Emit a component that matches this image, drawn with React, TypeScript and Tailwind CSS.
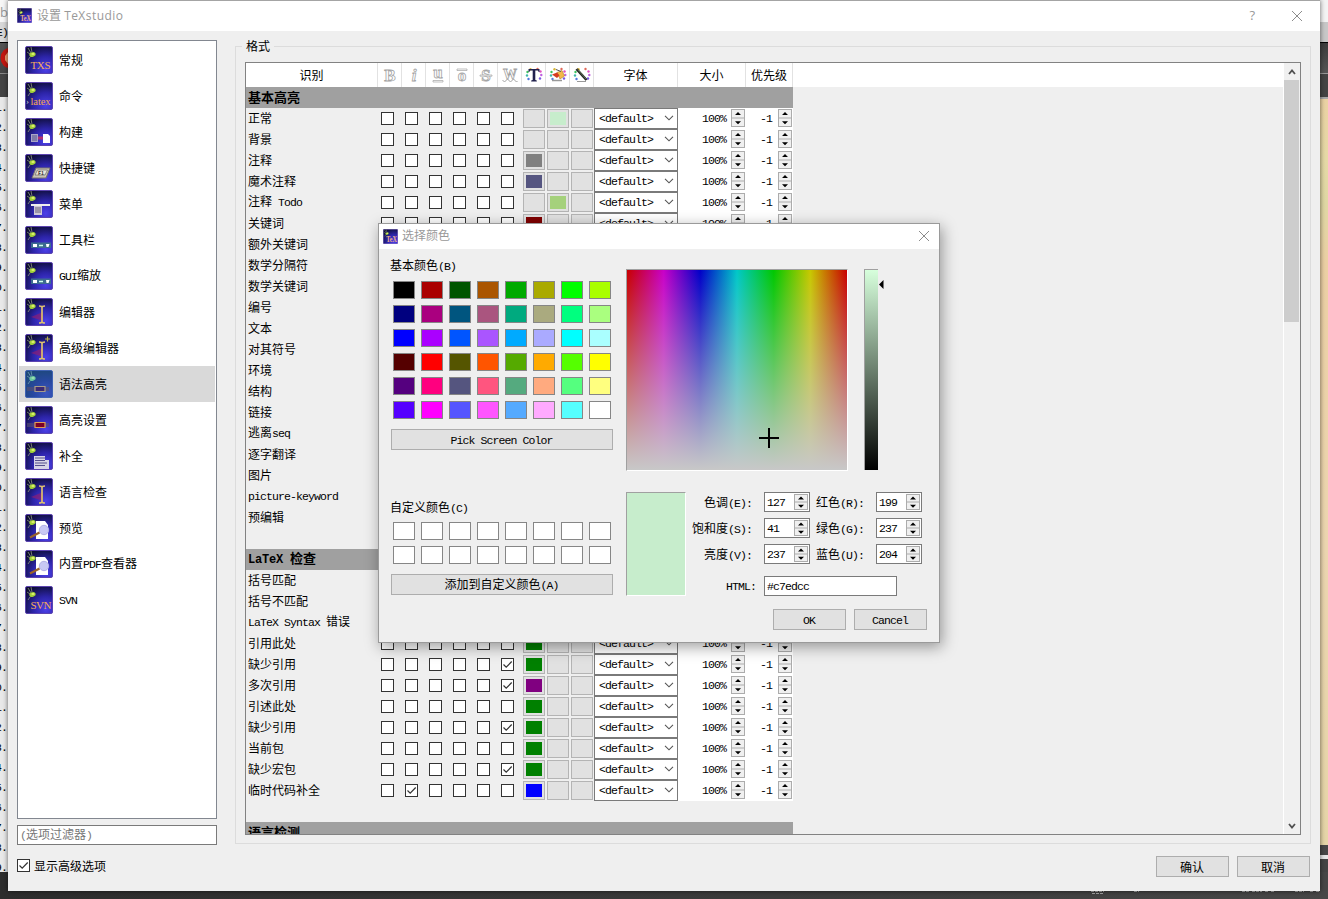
import React from 'react';

const CJK = "font-['Noto_Sans_CJK_SC',sans-serif]";

/** Mixed text: full-width glyphs take 12px, half-width glyphs take 6px. */
function T({ s, bold = false }: { s: string; bold?: boolean }) {
  const parts = s.match(/[\x20-\x7e]+|[^\x20-\x7e]+/g) ?? [];
  const ascii = /^[\x20-\x7e]+$/.test(s);
  return (
    <span
      className={
        (bold
          ? 'inline-flex items-baseline whitespace-pre text-[13px] font-bold leading-4'
          : 'inline-flex items-baseline whitespace-pre text-[12px] leading-4') + (ascii ? ' pt-[2px]' : '')
      }
    >
      {parts.map((p, i) =>
        /^[\x20-\x7e]+$/.test(p) ? (
          <span
            key={i}
            className={
              bold
                ? "font-['Liberation_Mono',monospace] text-[12px] tracking-[-0.2px]"
                : "font-['Liberation_Mono',monospace] text-[11.5px] tracking-[-0.9px]"
            }
          >
            {p}
          </span>
        ) : (
          <span key={i}>{p}</span>
        ),
      )}
    </span>
  );
}

function Glyph({ kind }: { kind: string }) {
  switch (kind) {
    case 'txs':
      return <text x="5.5" y="23" fontSize="11" fill="#f4ac5c" fontFamily="Liberation Serif" textLength="20">TXS</text>;
    case 'svn':
      return <text x="5.5" y="23" fontSize="11" fill="#f4ac5c" fontFamily="Liberation Serif" textLength="21">SVN</text>;
    case 'latex':
      return (
        <g fontFamily="Liberation Serif" fontSize="10.5">
          <text x="1" y="22" fill="#c8c8d8" fontSize="9">›</text>
          <text x="5.5" y="23" fill="#f4a850" textLength="20">latex</text>
        </g>
      );
    case 'build':
      return (
        <g>
          <path d="M6 16h7v8H6z" fill="#a9a4c8" />
          <path d="M7 18h5M7 20h5M7 22h5" stroke="#55508c" />
          <path d="M13 20h5" stroke="#b03070" strokeWidth="3" />
          <path d="M18 16h5l2 2v7h-7z" fill="#fff" />
        </g>
      );
    case 'key':
      return (
        <g>
          <path d="M11 14h14l-4 10H7z" fill="#c9c4b4" stroke="#77736c" />
          <path d="M12.500 16h10l-2.500 5H10z" fill="#e9e6da" stroke="#555" strokeWidth=".6" />
          <text x="13" y="20.500" fontSize="5" fontWeight="bold" fill="#333">F1</text>
        </g>
      );
    case 'menu':
      return (
        <g>
          <path d="M6 14h19v2H6z" fill="#eee" />
          <path d="M9 16h8v9H9z" fill="#cfc9d6" />
          <path d="M10 18h6M10 20h6M10 22h6" stroke="#66607a" />
        </g>
      );
    case 'tool':
      return (
        <g>
          <path d="M6 16.500h20v5.500H6z" fill="#3c6a90" />
          <path d="M8 18h4v3H8zM21 18h3.500l-1 3h-2z" fill="#fff" />
          <path d="M14 19.500h4" stroke="#cfe" strokeWidth="1.500" />
        </g>
      );
    case 'edit':
    case 'editplus':
      return (
        <g>
          <path d="M6 19l12-5v9z" fill="#9b1d68" opacity=".6" />
          <path d="M14 8c2 0 3 .5 3 1.500 0-1 1-1.500 3-1.500M17 9v15M14 25c2 0 3-.5 3-1.500 0 1 1 1.500 3 1.500" fill="none" stroke="#dcc070" strokeWidth="1.700" />
          {kind === 'editplus' && <path d="M20 5h5M22.500 2.500v5" stroke="#b9b04a" strokeWidth="1.200" />}
        </g>
      );
    case 'hl':
    case 'hlsel':
      return (
        <g>
          <path d="M2 17h22v4H2z" fill="#5a5070" opacity=".6" />
          <path d="M10 16.500h10v5H10z" fill={kind === 'hl' ? '#7c0028' : '#3c2a74'} stroke={kind === 'hl' ? '#dc9c58' : '#a89c88'} strokeWidth="1.200" />
        </g>
      );
    case 'comp':
      return (
        <g>
          <path d="M9 14h11v4h4v9H9z" fill="#d7d4e6" />
          <path d="M10 16h10M10 18.500h10M10 21h12M10 23.500h10" stroke="#55508c" />
        </g>
      );
    default:
      return (
        <g>
          <path d="M11 7h9l3 4v14H11z" fill="#fff" />
          <circle cx="19" cy="16" r="4.700" fill="#c8c8f4" stroke="#b2b0e6" />
          <path d="M5 23.500l9.500-5" stroke="#9a6228" strokeWidth="2.200" />
        </g>
      );
  }
}

function AppIcon({ kind, size, id }: { kind: string; size: number; id: string }) {
  const sel = kind === 'hlsel';
  return (
    <svg width={size} height={size} viewBox="0 0 28 28" className="shrink-0">
      <defs>
        <radialGradient id={id} cx=".75" cy=".85" r=".95">
          <stop offset="0" stopColor={sel ? '#3c56c0' : '#4c40e8'} />
          <stop offset=".5" stopColor={sel ? '#2848a0' : '#2c24a8'} />
          <stop offset="1" stopColor={sel ? '#1c4878' : '#0c0c30'} />
        </radialGradient>
      </defs>
      <rect x=".5" y=".5" width="27" height="27" rx="1.500" fill={'url(#' + id + ')'} stroke={sel ? '#3f62b4' : '#5c44b0'} />
      <path d="M3 2l3 5M6 1l1 5M2 6l3 2M5 11l-2 3" stroke={sel ? '#6f9ab0' : '#8c947c'} strokeWidth=".8" />
      <ellipse cx="7.500" cy="8.500" rx="3.200" ry="2.300" transform="rotate(-18 7.500 8.500)" fill={sel ? '#6cc8a0' : '#a0d038'} />
      <ellipse cx="8" cy="8" rx="1.600" ry="1.100" fill={sel ? '#9ce0b0' : '#e0f070'} />
      {kind === 'app' ? (
        <text x="6" y="25" fontSize="15" fontWeight="bold" fill="#f0b088" fontFamily="Liberation Serif" textLength="20" lengthAdjust="spacingAndGlyphs">TeX</text>
      ) : (
        <Glyph kind={kind} />
      )}
    </svg>
  );
}

const NAV: [string, string][] = [
  ['常规', 'txs'], ['命令', 'latex'], ['构建', 'build'], ['快捷键', 'key'], ['菜单', 'menu'], ['工具栏', 'tool'],
  ['GUI缩放', 'tool'], ['编辑器', 'edit'], ['高级编辑器', 'editplus'], ['语法高亮', 'hlsel'], ['高亮设置', 'hl'], ['补全', 'comp'],
  ['语言检查', 'edit'], ['预览', 'view'], ['内置PDF查看器', 'view'], ['SVN', 'svn'],
];

function Check({ on = false }: { on?: boolean }) {
  return (
    <span className="flex h-[13px] w-[13px] shrink-0 items-center justify-center border border-[#333] bg-white">
      {on && (
        <svg width="11" height="11" viewBox="0 0 11 11">
          <path d="M1.500 5.500l2.700 2.700L9.700 2.500" fill="none" stroke="#333" strokeWidth="1.200" />
        </svg>
      )}
    </span>
  );
}

function Spinner({ h }: { h: number }) {
  return (
    <svg width="14" height={h} viewBox={'0 0 14 ' + h} className="shrink-0">
      <rect x=".5" y=".5" width="13" height={h - 1} fill="#f0f0f0" stroke="#acacac" />
      <path d={'M0 ' + h / 2 + 'h14'} stroke="#acacac" />
      <path d={'M4 ' + (h / 4 + 1.5) + 'h6l-3-3zM4 ' + (h * 0.75 - 1.2) + 'h6l-3 3z'} fill="#000" />
    </svg>
  );
}

type Row = { n: string; on?: number; c?: [number, string] };

const BASIC: Row[] = [
  { n: '正常', c: [1, '#c7edcc'] }, { n: '背景' }, { n: '注释', c: [0, '#808080'] }, { n: '魔术注释', c: [0, '#555580'] },
  { n: '注释 Todo', c: [1, '#a5d17c'] }, { n: '关键词', c: [0, '#800000'] }, { n: '额外关键词' }, { n: '数学分隔符' }, { n: '数学关键词' },
  { n: '编号' }, { n: '文本' }, { n: '对其符号' }, { n: '环境' }, { n: '结构' }, { n: '链接' }, { n: '逃离seq' }, { n: '逐字翻译' },
  { n: '图片' }, { n: 'picture-keyword' }, { n: '预编辑' },
];
const G = '#008000';
const LATEX: Row[] = [
  { n: '括号匹配' }, { n: '括号不匹配' }, { n: 'LaTeX Syntax 错误' }, { n: '引用此处', c: [0, G] }, { n: '缺少引用', on: 5, c: [0, G] },
  { n: '多次引用', on: 5, c: [0, '#800080'] }, { n: '引述此处', c: [0, G] }, { n: '缺少引用', on: 5, c: [0, G] }, { n: '当前包', c: [0, G] },
  { n: '缺少宏包', on: 5, c: [0, G] }, { n: '临时代码补全', on: 1, c: [0, '#0000ff'] },
];

function FormatRow({ r }: { r: Row }) {
  return (
    <div className="flex h-[21px] w-[547px] shrink-0 items-stretch">
      <div className="flex w-[132px] items-center pb-[2px] pl-[2px]"><T s={r.n} /></div>
      {[0, 1, 2, 3, 4, 5].map((i) => (
        <div key={i} className="w-6 pl-[3px] pt-1"><Check on={r.on === i} /></div>
      ))}
      {[0, 1, 2].map((i) => (
        <div key={i} className="w-6 pl-px pt-px">
          <div className="flex h-[19px] w-[22px] items-center justify-center border border-[#b4b4b4] bg-[#e1e1e1]">
            {r.c && r.c[0] === i && <div className="h-[13px] w-4" style={{ background: r.c[1] }} />}
          </div>
        </div>
      ))}
      <div className="flex w-[84px] items-center justify-between border border-[#7a7a7a] bg-white pb-px pl-1 pr-[3px]">
        <T s="<default>" />
        <svg width="10" height="6" viewBox="0 0 10 6"><path d="M1 .8l4 4 4-4" fill="none" stroke="#555" strokeWidth="1.100" /></svg>
      </div>
      <div className="flex w-[68px] items-start justify-end bg-white pr-px pt-px">
        <span className="flex h-[18px] items-center pr-[5px]"><T s="100%" /></span>
        <Spinner h={18} />
      </div>
      <div className="flex w-[47px] items-start justify-end bg-white pr-px pt-px">
        <span className="flex h-[18px] items-center pr-[6px]"><T s="-1" /></span>
        <Spinner h={18} />
      </div>
    </div>
  );
}

function Category({ s }: { s: string }) {
  return (
    <div className="flex h-[21px] w-[547px] shrink-0 items-center bg-[#a0a0a0] pb-px pl-[2px]"><T s={s} bold /></div>
  );
}

function Letter({ c }: { c: string }) {
  const wave = c === 'W';
  return (
    <svg width="18" height="18" viewBox="0 0 18 18">
      <text
        x="9" y={c === 'u' ? 12 : c === 'o' ? 15 : wave ? 13 : 15}
        textAnchor="middle" fontFamily="Liberation Serif" fontWeight="bold"
        fontStyle={c === 'i' ? 'italic' : 'normal'}
        fontSize={wave ? 14 : 17} fill="#fff" stroke="#a4a4a4" strokeWidth=".8"
      >
        {c}
      </text>
      {c === 'u' && <path d="M4 14.500h10v1.500H4z" fill="#fff" stroke="#a4a4a4" strokeWidth=".7" />}
      {c === 'o' && <path d="M4 3h10v1.500H4z" fill="#fff" stroke="#a4a4a4" strokeWidth=".7" />}
      {c === 'S' && <path d="M3 9h12v1.200H3z" fill="#fff" stroke="#a4a4a4" strokeWidth=".7" />}
      {wave && <path d="M1.500 14l2 2 3-3 3 3 3-3 3 3 1-1" fill="none" stroke="#a4a4a4" />}
    </svg>
  );
}

function Dots() {
  return (
    <g>
      <circle cx="2.500" cy="6" r="1.200" fill="#3cc45c" /><circle cx="2" cy="9.500" r="1.200" fill="#40b8a8" /><circle cx="3.500" cy="13" r="1.200" fill="#5078e0" />
      <circle cx="15.500" cy="5.500" r="1.200" fill="#e050c0" /><circle cx="16.300" cy="9" r="1.200" fill="#c060e0" /><circle cx="15" cy="12.500" r="1.200" fill="#7858e0" />
      <circle cx="5.500" cy="3.300" r="1.200" fill="#d8b83c" /><circle cx="12.500" cy="3" r="1.200" fill="#e06858" />
    </g>
  );
}

function ColorHead({ k }: { k: number }) {
  return (
    <svg width="18" height="18" viewBox="0 0 18 18" className="ml-px">
      <Dots />
      {k === 0 && <path d="M3.500 3h11v3h-.8l-.7-1.600h-2.700V14l1.500.6v.9H6.200v-.9l1.500-.6V4.400H5L4.300 6h-.8z" fill="#20204c" />}
      {k === 1 && (
        <g>
          <path d="M8 6.500l5-2 2.500 5.500-4.500 3z" fill="#f4b848" stroke="#b07c28" strokeWidth=".6" />
          <path d="M3 8.500l5-2 2.500 3L8 12z" fill="#d63c20" />
          <path d="M3 14.500h10" stroke="#999" strokeWidth="1.500" />
          <path d="M7 3.500l5 2" stroke="#555" />
        </g>
      )}
      {k === 2 && (
        <g>
          <path d="M3.500 3l10 11" stroke="#222" strokeWidth="2.600" />
          <path d="M4.500 3.500l8.500 9.500" stroke="#6c8868" strokeWidth=".8" />
          <path d="M4 15.500h9" stroke="#999" />
        </g>
      )}
    </svg>
  );
}

function HeadCell({ w, children }: { w: string; children: React.ReactNode }) {
  return <div className={'flex items-center justify-center border-r border-[#e2e2e2] ' + w}>{children}</div>;
}

function Btn({ s, w }: { s: string; w: string }) {
  return (
    <div className={'flex h-[21px] items-center justify-center border border-[#adadad] bg-[#e1e1e1] pr-px ' + w}><T s={s} /></div>
  );
}

const PALETTE = [
  '#000000', '#aa0000', '#005500', '#aa5500', '#00aa00', '#aaaa00', '#00ff00', '#aaff00',
  '#00007f', '#aa007f', '#00557f', '#aa557f', '#00aa7f', '#aaaa7f', '#00ff7f', '#aaff7f',
  '#0000ff', '#aa00ff', '#0055ff', '#aa55ff', '#00aaff', '#aaaaff', '#00ffff', '#aaffff',
  '#550000', '#ff0000', '#555500', '#ff5500', '#55aa00', '#ffaa00', '#55ff00', '#ffff00',
  '#55007f', '#ff007f', '#55557f', '#ff557f', '#55aa7f', '#ffaa7f', '#55ff7f', '#ffff7f',
  '#5500ff', '#ff00ff', '#5555ff', '#ff55ff', '#55aaff', '#ffaaff', '#55ffff', '#ffffff',
];

function Swatches({ colors }: { colors: string[] }) {
  return (
    <div className="grid grid-cols-[repeat(8,22px)] gap-x-[6px] gap-y-[6px] pl-[3px]">
      {colors.map((c, i) => (
        <div key={i} className="h-[18px] w-[22px] border border-[#868686]" style={{ background: c }} />
      ))}
    </div>
  );
}

function SpinBox({ v }: { v: string }) {
  return (
    <div className="flex h-5 w-[46px] items-center justify-between border border-[#7a7a7a] bg-white pl-[2px] pr-px">
      <T s={v} />
      <Spinner h={16} />
    </div>
  );
}

function Close() {
  return <svg width="12" height="12" viewBox="0 0 12 12"><path d="M1 1l10 10M11 1L1 11" stroke="#8c8c8c" fill="none" /></svg>;
}

function ColorDialog() {
  return (
    <div className="absolute left-[378px] top-[223px] flex h-[420px] w-[562px] flex-col border border-[#9a9a9a] bg-[#efefef] shadow-[2px_4px_14px_rgba(0,0,0,0.38)]">
      <div className="flex h-[25px] shrink-0 items-center bg-white pb-px pl-1 pr-[9px]">
        <AppIcon kind="app" size={15} id="dlgicon" />
        <span className="ml-1 flex-1 pb-[2px] text-[12px] text-[#999]">选择颜色</span>
        <Close />
      </div>
      <div className="flex flex-1 pl-[11px]">
        <div className="flex w-[223px] flex-col pt-[9px]">
          <div className="flex h-4 items-center"><T s="基本颜色(B)" /></div>
          <div className="mt-[7px]"><Swatches colors={PALETTE} /></div>
          <div className="ml-px mt-[10px]"><Btn s="Pick Screen Color" w="w-[222px]" /></div>
          <div className="mt-[50px] flex h-4 items-center"><T s="自定义颜色(C)" /></div>
          <div className="mt-[6px]"><Swatches colors={Array(16).fill('#ffffff')} /></div>
          <div className="ml-px mt-[10px]"><Btn s="添加到自定义颜色(A)" w="w-[222px]" /></div>
        </div>
        <div className="flex flex-1 flex-col pl-[13px] pt-5">
          <div className="flex">
            <div className="relative h-[202px] w-[222px] border border-b-white border-l-[#a0a0a0] border-r-white border-t-[#a0a0a0] bg-[linear-gradient(to_bottom,rgba(200,200,200,0),#c8c8c8),linear-gradient(to_right,#c80000,#c800c8,#0000c8,#00c8c8,#00c800,#c8c800,#c80000)]">
              <svg width="20" height="20" viewBox="0 0 20 20" className="absolute left-[132px] top-[158px]"><path d="M10 0v20M0 10h20" stroke="#000" strokeWidth="2" /></svg>
            </div>
            <div className="ml-4 h-[201px] w-[14px] border-l border-t border-[#a0a0a0] bg-[linear-gradient(to_bottom,#d7ffdc,#000)]" />
            <svg width="6" height="10" viewBox="0 0 6 10" className="mt-[11px]"><path d="M5.500 0v9L1 4.500z" fill="#000" /></svg>
          </div>
          <div className="mt-[21px] flex">
            <div className="h-[104px] w-[60px] border border-b-white border-l-[#a0a0a0] border-r-white border-t-[#a0a0a0] bg-[#c7edcc]" />
            <div className="flex flex-col">
              <div className="grid grid-cols-[78px_52px_60px_46px] gap-y-[6px]">
                {[
                  ['色调(E):', '127', '红色(R):', '199'],
                  ['饱和度(S):', '41', '绿色(G):', '237'],
                  ['亮度(V):', '237', '蓝色(U):', '204'],
                ].map((r) => (
                  <React.Fragment key={r[0]}>
                    <div className="flex items-center justify-end pr-3 pt-px"><T s={r[0]} /></div>
                    <SpinBox v={r[1]} />
                    <div className="flex items-center pt-px"><T s={r[2]} /></div>
                    <SpinBox v={r[3]} />
                  </React.Fragment>
                ))}
              </div>
              <div className="mt-3 flex">
                <div className="flex w-[78px] items-center justify-end pr-2"><T s="HTML:" /></div>
                <div className="flex h-5 w-[133px] items-center border border-[#7a7a7a] bg-white pl-[2px]"><T s="#c7edcc" /></div>
              </div>
            </div>
          </div>
          <div className="mt-[13px] flex gap-2 pl-[147px]">
            <Btn s="OK" w="w-[73px]" />
            <Btn s="Cancel" w="w-[73px]" />
          </div>
        </div>
      </div>
    </div>
  );
}

function Backdrop() {
  return (
    <div className="flex h-full w-full flex-col">
      <div className="flex h-[872px] shrink-0 justify-between">
        <div className="flex w-2 flex-col overflow-hidden bg-[#e9e9e9]">
          <div className="h-[22px] shrink-0 bg-[#f7f7f7] pt-[3px] font-['Open_Sans',sans-serif] text-[13px] leading-[18px] text-[#999]">b</div>
          <div className="flex h-5 shrink-0 items-center justify-end bg-[#d8d8d8]"><T s="E)" /></div>
          <div className="flex h-[31px] shrink-0 items-center border-t border-black bg-gradient-to-b from-[#555] to-[#444]">
            <svg width="8" height="22" viewBox="0 0 8 22"><circle cx="11" cy="11" r="10.500" fill="#c41810" /><path d="M5 9l3-4v12l-3-4z" fill="#f0a070" /></svg>
          </div>
          <div className="h-6 shrink-0 border-t border-[#888] bg-[#444]" />
          <div className="flex h-[775px] shrink-0 flex-col overflow-hidden">
            {Array.from({ length: 39 }, (_, i) => (
              <div key={i} className="flex h-5 shrink-0 items-center justify-end pr-px"><T s={((i + 1) % 10) + '.'} /></div>
            ))}
          </div>
        </div>
        <div className="flex w-2 flex-col">
          <div className="h-[22px] bg-[#f4f4f4]" />
          <div className="h-5 bg-[#c8c8c8]" />
          <div className="h-[31px] border-t border-black bg-gradient-to-b from-[#3c3c3c] to-[#555]" />
          <div className="h-6 border-t border-[#999] bg-[#444]" />
          <div className="h-[748px] border-t-2 border-[#aaa] bg-[linear-gradient(to_bottom,#ecd2a4,#e6daa6_8%,#e0d8a4_14%,#ecd0a4_22%,#ecd6b0_60%,#e6d6a8)]" />
          <div className="h-[10px] bg-[#484848]" />
          <div className="h-1 bg-[#e8e8e8]" />
          <div className="flex-1 bg-[#444]" />
        </div>
      </div>
      <div className="flex flex-1 justify-end bg-gradient-to-r from-[#2d2d2d] to-[#474747]">
        <svg width="240" height="27" viewBox="0 0 240 27">
          <path d="M3 19.500h13M4 21.500h12M46 19.500h5M154 19.500h8M164 19.500h10M177 19.500h3M183 19.500h4M207 19.500h9M222 19.500h3M228 19.500h3" stroke="#a8a8a8" strokeDasharray="3 1" />
        </svg>
      </div>
    </div>
  );
}

export default function App() {
  return (
    <div className={'relative h-[899px] w-[1328px] overflow-hidden text-black ' + CJK}>
      <Backdrop />
      <div className="absolute left-2 top-0 flex h-[891px] w-[1312px] flex-col border-t border-[#a4a4a4] bg-[#efefef] shadow-[0_0_5px_rgba(0,0,0,0.6)]">
        <div className="flex h-[30px] shrink-0 items-center bg-white pb-px pl-[9px] pr-[17px] font-['Open_Sans','Noto_Sans_CJK_SC',sans-serif] text-[12px] text-[#999]">
          <AppIcon kind="app" size={15} id="winicon" />
          <span className="ml-[5px] flex-1 whitespace-pre">设置 <span className="tracking-[0.45px]">TeXstudio</span></span>
          <span className="mr-[36px] text-[13px]">?</span>
          <Close />
        </div>
        <div className="flex flex-1 pl-[9px]">
          <div className="flex w-[200px] flex-col pt-[9px]">
            <div className="h-[779px] border border-[#828790] bg-white p-px">
              {NAV.map(([name, kind], i) => (
                <div key={i} className={'flex h-9 items-center pl-[6px] ' + (kind === 'hlsel' ? 'bg-[#d9d9d9]' : '')}>
                  <AppIcon kind={kind} size={28} id={'nav' + i} />
                  <span className="ml-[6px] flex pb-px"><T s={name} /></span>
                </div>
              ))}
            </div>
            <div className="mt-[6px] flex h-5 items-center border border-[#7a7a7a] bg-white pl-[2px] text-[#777]"><T s="(选项过滤器)" /></div>
            <div className="mt-[14px] flex h-[13px] items-center gap-1">
              <Check on />
              <T s="显示高级选项" />
            </div>
          </div>
          <div className="ml-[18px] flex w-[1076px] flex-col pt-[7px]">
            <div className="flex h-4 items-center">
              <div className="h-px w-[7px] bg-[#dcdcdc]" />
              <span className="flex px-1 pb-px"><T s="格式" /></span>
              <div className="h-px flex-1 bg-[#dcdcdc]" />
            </div>
            <div className="-mt-2 flex h-[798px] border-x border-b border-[#dcdcdc] pl-[9px] pt-4">
              <div className="flex h-[773px] w-[1056px] border border-[#828282]">
                <div className="flex flex-1 flex-col overflow-hidden border-r border-white">
                  <div className="flex h-6 shrink-0 bg-white">
                    <HeadCell w="w-[132px]"><T s="识别" /></HeadCell>
                    {['B', 'i', 'u', 'o', 'S', 'W'].map((c) => (
                      <HeadCell key={c} w="w-6"><Letter c={c} /></HeadCell>
                    ))}
                    {[0, 1, 2].map((k) => (
                      <HeadCell key={k} w="w-6"><ColorHead k={k} /></HeadCell>
                    ))}
                    <HeadCell w="w-[84px]"><T s="字体" /></HeadCell>
                    <HeadCell w="w-[68px]"><T s="大小" /></HeadCell>
                    <HeadCell w="w-[47px]"><T s="优先级" /></HeadCell>
                  </div>
                  <Category s="基本高亮" />
                  {BASIC.map((r, i) => <FormatRow key={i} r={r} />)}
                  <div className="h-[21px] shrink-0" />
                  <Category s="LaTeX 检查" />
                  {LATEX.map((r, i) => <FormatRow key={i} r={r} />)}
                  <div className="h-[21px] shrink-0" />
                  <Category s="语言检测" />
                </div>
                <div className="flex w-4 flex-col items-center justify-between bg-[#f0f0f0] pb-[5px] pr-px">
                  <div className="flex w-full flex-col items-center">
                    <svg width="8" height="6" viewBox="0 0 8 6" className="mb-[5px] mt-[6px]"><path d="M1 5l3-3.500L7 5" fill="none" stroke="#505050" strokeWidth="1.800" /></svg>
                    <div className="h-[242px] w-full bg-[#cdcdcd]" />
                  </div>
                  <svg width="8" height="6" viewBox="0 0 8 6"><path d="M1 1l3 3.500L7 1" fill="none" stroke="#505050" strokeWidth="1.800" /></svg>
                </div>
              </div>
            </div>
            <div className="mt-[12px] flex justify-end gap-2 pr-px">
              <Btn s="确认" w="w-[73px]" />
              <Btn s="取消" w="w-[73px]" />
            </div>
          </div>
        </div>
      </div>
      <ColorDialog />
    </div>
  );
}
